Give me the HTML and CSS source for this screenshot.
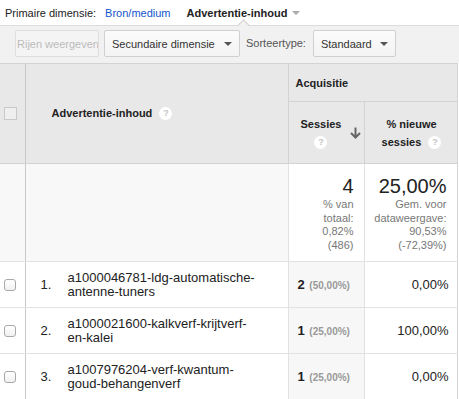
FILE: index.html
```html
<!DOCTYPE html>
<html lang="nl">
<head>
    <meta charset="UTF-8">
    <title>Advertentie-inhoud</title>
    <link rel="stylesheet" href="styles.css">
</head>
<body>
    <div class="topbar">
        <span class="dim-label">Primaire dimensie:</span>
        <a class="dim-link">Bron/medium</a>
        <span class="dim-current">Advertentie-inhoud <span class="caret caret-light"></span></span>
    </div>

    <div class="toolbar">
        <span class="notch"></span>
        <button class="btn btn-disabled">Rijen weergeven</button>
        <button class="btn btn-select btn-secondary-dim">Secundaire dimensie <span class="caret"></span></button>
        <span class="sort-label">Sorteertype:</span>
        <button class="btn btn-select btn-sort">Standaard <span class="caret"></span></button>
    </div>

    <table class="report">
        <colgroup>
            <col class="c-check">
            <col class="c-dim">
            <col class="c-sessions">
            <col class="c-new">
        </colgroup>
        <thead>
            <tr class="head-group">
                <th rowspan="2" class="col-check"><span class="check-head"></span></th>
                <th rowspan="2" class="col-dim">Advertentie-inhoud <span class="help">?</span></th>
                <th colspan="2" class="group">Acquisitie</th>
            </tr>
            <tr class="head-metrics">
                <th class="metric-sessions">
                    <div class="sessions-head">
                        <div class="sessions-title">Sessies<br><span class="help">?</span></div>
                        <svg class="sort-arrow" width="11" height="12" viewBox="0 0 11 12">
                            <path d="M5.5 0.5 V10.5 M1 6 L5.5 10.5 L10 6" fill="none" stroke="#666" stroke-width="2"/>
                        </svg>
                    </div>
                </th>
                <th class="metric-new">% nieuwe<br>sessies <span class="help">?</span></th>
            </tr>
        </thead>
        <tbody>
            <tr class="summary">
                <td class="col-check"></td>
                <td></td>
                <td class="sum">
                    <div class="sum-big">4</div>
                    <div class="sum-small">% van<br>totaal:<br>0,82%<br>(486)</div>
                </td>
                <td class="sum">
                    <div class="sum-big">25,00%</div>
                    <div class="sum-small">Gem. voor<br>dataweergave:<br>90,53%<br>(-72,39%)</div>
                </td>
            </tr>
            <tr class="row">
                <td class="col-check"><span class="checkbox"></span></td>
                <td class="dim"><span class="num">1.</span><span class="name">a1000046781-ldg-automatische-<br>antenne-tuners</span></td>
                <td class="val-sessions"><b>2</b> <span class="pct">(50,00%)</span></td>
                <td class="val-new">0,00%</td>
            </tr>
            <tr class="row">
                <td class="col-check"><span class="checkbox"></span></td>
                <td class="dim"><span class="num">2.</span><span class="name">a1000021600-kalkverf-krijtverf-<br>en-kalei</span></td>
                <td class="val-sessions"><b>1</b> <span class="pct">(25,00%)</span></td>
                <td class="val-new">100,00%</td>
            </tr>
            <tr class="row">
                <td class="col-check"><span class="checkbox"></span></td>
                <td class="dim"><span class="num">3.</span><span class="name">a1007976204-verf-kwantum-<br>goud-behangenverf</span></td>
                <td class="val-sessions"><b>1</b> <span class="pct">(25,00%)</span></td>
                <td class="val-new">0,00%</td>
            </tr>
        </tbody>
    </table>
</body>
</html>
```

FILE: styles.css
```css
body {
    margin: 0;
    font-family: "Liberation Sans", Arial, sans-serif;
    font-size: 11px;
    color: #222;
    background: #fff;
}

/* primary dimension bar */
.topbar {
    height: 25px;
    display: flex;
    align-items: center;
    padding-left: 5px;
    border-bottom: 1px solid #dcdcdc;
}

.dim-link {
    color: #1155cc;
    margin-left: 9px;
}

.dim-current {
    font-weight: bold;
    margin-left: 16px;
    display: flex;
    align-items: center;
}

.caret {
    display: inline-block;
    width: 0;
    height: 0;
    border-left: 4px solid transparent;
    border-right: 4px solid transparent;
    border-top: 4px solid #555;
}

.caret-light {
    border-top-color: #aaa;
    margin-left: 5px;
}

/* toolbar */
.toolbar {
    position: relative;
    height: 37px;
    background-color: #f1f1f1;
    display: flex;
    align-items: flex-start;
    padding: 4px 0 0 15px;
    box-sizing: border-box;
}

.notch {
    position: absolute;
    left: 239px;
    top: -5px;
    width: 8px;
    height: 8px;
    background-color: #f1f1f1;
    border-top: 1px solid #d0d0d0;
    border-left: 1px solid #d0d0d0;
    transform: rotate(45deg);
}

.btn {
    font-family: inherit;
    font-size: 11px;
    height: 27px;
    border: 1px solid #d0d0d0;
    border-radius: 2px;
    background: linear-gradient(#fbfbfb, #f3f3f3);
    color: #333;
    padding: 0;
    display: flex;
    align-items: center;
}

.btn-disabled {
    width: 84px;
    color: #bbb;
    border-color: #dedede;
    background: #f4f4f4;
    padding-left: 1px;
    overflow: hidden;
    white-space: nowrap;
}

.btn-select {
    justify-content: space-between;
    padding: 0 7px 0 7px;
}

.btn-secondary-dim {
    width: 136px;
    margin-left: 5px;
}

.btn-sort {
    width: 83px;
    margin-left: 7px;
}

.sort-label {
    color: #555;
    margin-left: 6px;
    line-height: 27px;
}

/* report table */
.report {
    border-collapse: collapse;
    table-layout: fixed;
    width: 457px;
}

.c-check { width: 25px; }
.c-dim { width: 263px; }
.c-sessions { width: 76px; }
.c-new { width: 93px; }

.report th {
    background-color: #e8e8e8;
    font-weight: bold;
    text-align: left;
    border: 1px solid #d3d3d3;
    padding: 0;
}

.report td {
    padding: 0;
    border: 1px solid #e2e2e2;
}

.report .col-check {
    border-left: none;
    border-right: 1px solid #c8c8c8;
    padding-left: 4px;
}

.report tr > :last-child {
    border-right: 1px solid #d3d3d3;
}

.head-group {
    height: 38px;
}

.head-metrics {
    height: 62px;
}

.check-head {
    display: block;
    width: 11px;
    height: 11px;
    border: 1px solid #c9c9c9;
    background-color: #efefef;
}

.report th.col-dim {
    padding-left: 26px;
}

.help {
    display: inline-block;
    width: 13px;
    height: 13px;
    border-radius: 50%;
    background-color: #fff;
    color: #c4c4c4;
    font-size: 9px;
    line-height: 13px;
    text-align: center;
    vertical-align: middle;
    margin-left: 4px;
}

.report th.group {
    padding-left: 7px;
}

.report th.metric-sessions {
    padding: 0 3px 0 12px;
    line-height: 18px;
}

.sessions-head {
    display: flex;
    align-items: center;
    justify-content: space-between;
}

.sessions-title {
    text-align: center;
}

.sessions-title .help {
    margin-left: 0;
}

.sort-arrow {
    margin-top: 1px;
}

.report th.metric-new {
    text-align: center;
    line-height: 18px;
    padding-left: 2px;
}

/* summary row */
.summary {
    height: 98px;
}

.summary td {
    background-color: #f8f8f8;
    border-top: 1px solid #d3d3d3;
}

.report td.sum {
    background-color: #fff;
    vertical-align: top;
    text-align: right;
    padding: 10px 10px 0 0;
}

.sum-big {
    font-size: 20px;
    line-height: 24px;
    color: #222;
}

.sum-small {
    color: #777;
    line-height: 13.5px;
}

/* data rows */
.row {
    height: 46px;
    font-size: 13px;
}

.checkbox {
    display: block;
    width: 10px;
    height: 10px;
    border: 1px solid #a9a9a9;
    border-radius: 3px;
    background: linear-gradient(#fff, #f0f0f0);
}

.report td.dim {
    padding-left: 15px;
}

.num {
    display: inline-block;
    width: 27px;
    vertical-align: middle;
}

.name {
    display: inline-block;
    line-height: 14px;
    vertical-align: middle;
}

.report td.val-sessions {
    background-color: #f7f7f7;
    padding-left: 9px;
}

.pct {
    font-size: 10px;
    font-weight: bold;
    color: #999;
    margin-left: 1px;
}

.report td.val-new {
    text-align: right;
    padding-right: 8px;
}
```
